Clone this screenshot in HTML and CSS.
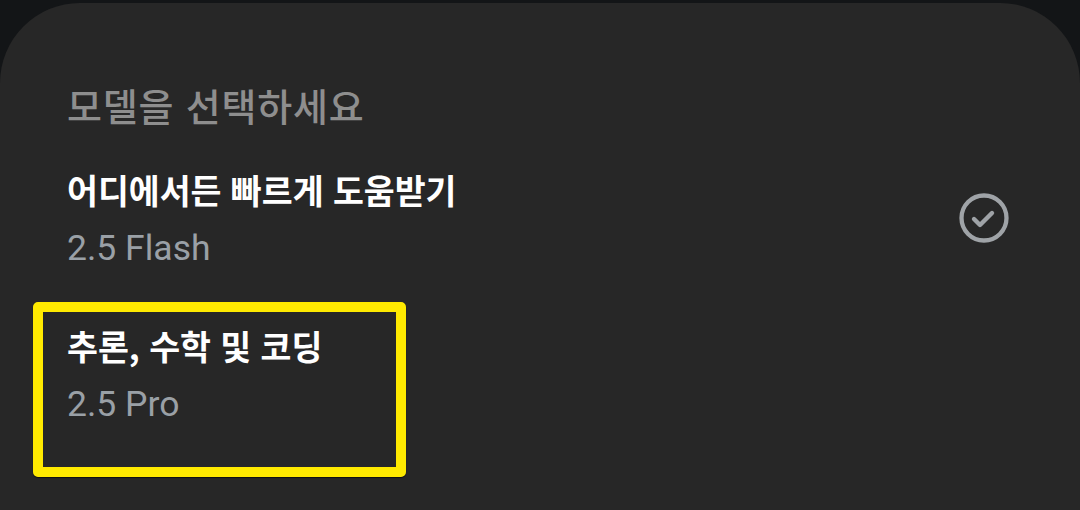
FILE: index.html
```html
<!DOCTYPE html>
<html lang="ko">
<head>
    <meta charset="UTF-8">
    <meta name="viewport" content="width=device-width, initial-scale=1.0">
    <title>모델 선택</title>
    <link rel="stylesheet" href="styles.css">
</head>
<body>
    <main class="sheet">
        <h2 class="sheet-title">모델을 선택하세요</h2>
        <div class="model-list">
            <div class="model-item selected">
                <div class="model-text">
                    <div class="model-name">어디에서든 빠르게 도움받기</div>
                    <div class="model-version">2.5 Flash</div>
                </div>
                <svg class="check-icon" width="56" height="56" viewBox="0 0 56 56">
                    <circle cx="28" cy="28" r="22.5" fill="none" stroke="currentColor" stroke-width="4.3"/>
                    <polyline points="18,29 24,35 36,23" fill="none" stroke="currentColor" stroke-width="4.4" stroke-linecap="round" stroke-linejoin="round"/>
                </svg>
            </div>
            <div class="model-item">
                <div class="model-text">
                    <div class="model-name">추론, 수학 및 코딩</div>
                    <div class="model-version">2.5 Pro</div>
                </div>
                <!-- highlight marker over the second option -->
                <div class="highlight-box"></div>
            </div>
        </div>
    </main>
</body>
</html>
```

FILE: styles.css
```css
html, body {
    margin: 0;
    height: 100%;
    overflow: hidden;
}
body {
    background-color: #131517;
    font-family: "Noto Sans CJK KR", "Noto Sans", sans-serif;
}
.sheet {
    display: block;
    margin-top: 3px;
    height: 507px;
    box-sizing: border-box;
    padding: 78px 68px 0 67px;
    background-color: #272727;
    border-radius: 80px 80px 0 0;
}
.sheet-title {
    margin: 0;
    font-size: 38px;
    font-weight: 500;
    line-height: 48px;
    letter-spacing: 0.8px;
    color: #8e8e8e;
}
.model-list {
    display: flex;
    flex-direction: column;
    gap: 56px;
    margin-top: 41px;
}
.model-item {
    position: relative;
    display: flex;
    justify-content: space-between;
    align-items: center;
}
.model-text {
    display: flex;
    flex-direction: column;
    gap: 16px;
}
.model-name {
    font-size: 33.6px;
    font-weight: 700;
    line-height: 40px;
    color: #ffffff;
}
.model-version {
    font-family: Roboto, "Noto Sans CJK KR", sans-serif;
    font-size: 35.5px;
    line-height: 44px;
    color: #9aa0a6;
}
.check-icon {
    color: #9fa3a7;
    margin-bottom: 5px;
}
.highlight-box {
    position: absolute;
    top: -24px;
    left: -34px;
    width: 373px;
    height: 175px;
    box-sizing: border-box;
    border: 10px solid #ffea00;
    border-radius: 5px;
    box-shadow: 0 1px 1px rgba(0, 0, 0, 0.6);
}
```
